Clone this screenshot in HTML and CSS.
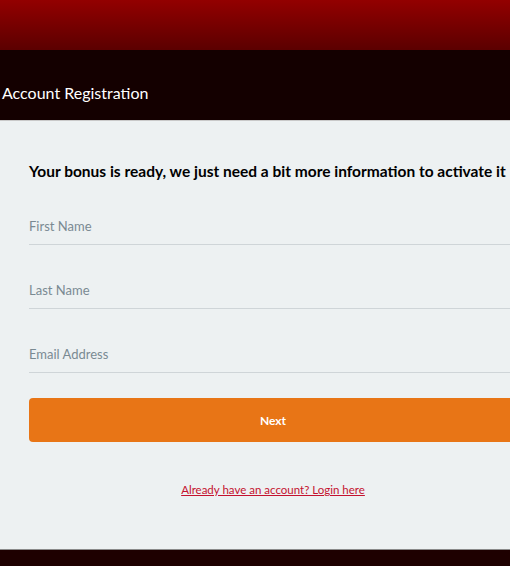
FILE: index.html
```html
<!DOCTYPE html>
<html>
<head>
<meta charset="utf-8">
<link rel="stylesheet" href="styles.css">
</head>
<body>
<div class="topbar"></div>
<div class="titlebar"><span class="title">Account Registration</span></div>
<main class="main">
  <div class="form">
    <h2 class="lead">Your bonus is ready, we just need a bit more information to activate it</h2>
    <div class="field">First Name</div>
    <div class="field">Last Name</div>
    <div class="field">Email Address</div>
    <button class="next">Next</button>
    <div class="login"><a href="#">Already have an account? Login here</a></div>
  </div>
</main>
<footer class="footer"></footer>
</body>
</html>
```
FILE: styles.css
```css
html, body {
  margin: 0;
  padding: 0;
  overflow: hidden;
  width: 510px;
  height: 566px;
}
body {
  font-family: "Lato", "Open Sans", sans-serif;
  background: #1e0000;
}
.topbar {
  height: 50px;
  background: linear-gradient(#930000, #5b0000);
}
.titlebar {
  height: 71px;
  background: #140000;
  box-sizing: border-box;
  padding-top: 33px;
  border-bottom: 1px solid #c9c9c9;
}
.title {
  color: #ffffff;
  font-size: 16px;
  padding-left: 2px;
}
.main {
  background: #edf1f2;
  height: 429px;
  box-sizing: border-box;
  padding: 41px 0 0 29px;
  border-bottom: 1px solid #8a8a8a;
}
.form {
  width: 488px;
}
.lead {
  margin: 0 0 21px;
  font-size: 15.5px;
  font-weight: 700;
  color: #000;
  white-space: nowrap;
}
.field {
  height: 44px;
  box-sizing: border-box;
  padding-top: 17px;
  border-bottom: 1px solid #cfd5d8;
  color: #7a8a92;
  font-size: 13px;
  margin-bottom: 20px;
}
.next {
  display: block;
  width: 100%;
  height: 44px;
  margin-top: 25px;
  border: 0;
  border-radius: 4px;
  background: #e87516;
  color: #fff;
  font-family: inherit;
  font-weight: 700;
  font-size: 12px;
}
.login {
  text-align: center;
  margin-top: 41px;
  font-size: 11.5px;
}
.login a {
  color: #c4122f;
}
.footer {
  height: 20px;
}
```
